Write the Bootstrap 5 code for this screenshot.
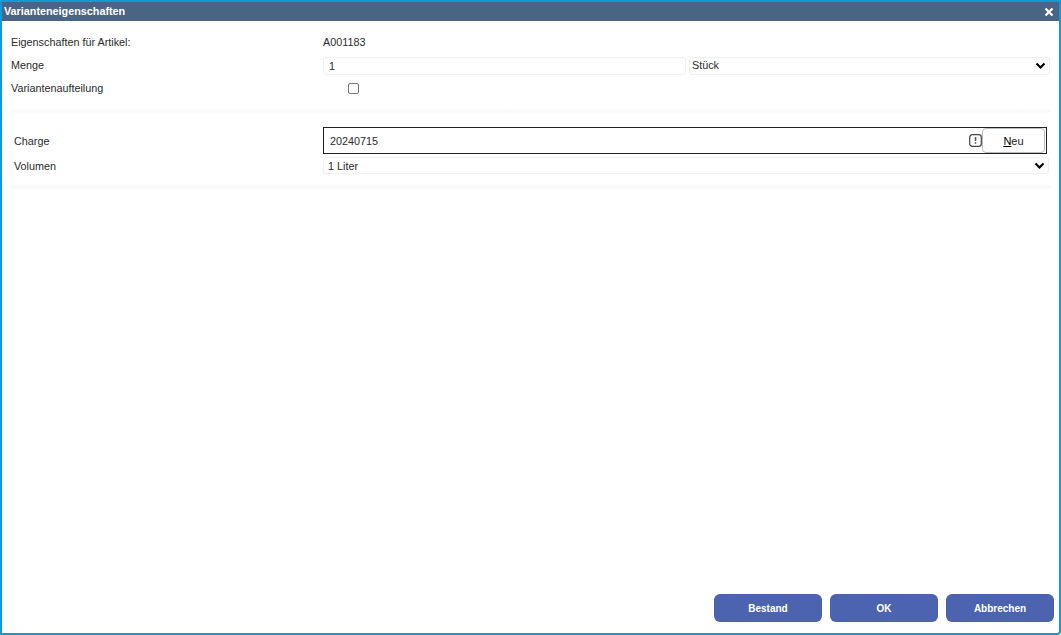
<!DOCTYPE html>
<html lang="de"><head><meta charset="utf-8"><title>Varianteneigenschaften</title>
<link href="https://cdn.jsdelivr.net/npm/bootstrap@5.3.0/dist/css/bootstrap.min.css" rel="stylesheet">
<style>
html,body{height:100%;margin:0;overflow:hidden;background:#fff}
body{font-family:"Liberation Sans",Arial,sans-serif;font-size:10.8px;color:#2a2a2a}
.dlg-frame{height:635px;width:1061px;border:2px solid #0e9bd8;border-bottom-right-radius:4px;background:#fff}
.dlg-title{height:19px;background:#4a6584;color:#fff;font-weight:700;padding:0 5px 0 2px;font-size:10.8px}
.dlg-x{width:10px;height:10px}
.sec-grid{display:grid;align-items:center}
.sec-one{padding:12px 0 0 9px;grid-template-columns:312px 363px 3px 361px;grid-template-rows:19px 18px 18px;row-gap:4.5px}
.sec-two{padding:13px 0 0 12px;grid-template-columns:309px 727px;grid-template-rows:27px 17px;row-gap:3px}
.band{height:6px;margin:0 8px;background:linear-gradient(#fff,#f8f8f8 50%,#fff)}
.band-a{margin-top:11px}
.band-b{margin-top:10px}
.lift{padding-top:2px}
.fld{height:18px;border:1px solid #f0f0f0;border-radius:3px;padding:1px 3px 0 3px;display:flex;align-items:center;background:#fff;justify-content:space-between}
.fld-input{padding-left:5px;width:363px}
.fld-unit{padding:0 3px 0 2px}
.fld-vol{padding-left:4px;width:726px;height:17px}
.chk-cell{padding-left:25px;display:flex}
.chk{width:10.5px;height:11px;border:1px solid #767676;border-radius:2px;background:#fff;display:block}
.charge-box{height:27px;border:1px solid #222;display:flex;align-items:center;padding:1px 1px 1px 3px;width:724px}
.charge-val{flex:1;height:19px;padding:2px 0 0 3px;display:flex;align-items:center}
.warn{width:13px;height:13px;flex:none}
.neu{width:63px;height:25px;border:1px solid #bbb;border-radius:4px;background:#fff;color:#222;padding-top:1px;text-align:center;line-height:23px;font-size:11px}
.neu u{color:#000}
.foot-btn{width:108px;height:28px;background:#4c63b0;color:#fff;font-weight:700;font-size:10px;border:0;border-radius:6px;padding:0}
.foot{padding:0 5px 11px 0;gap:8px}
.chev{width:11px;height:8px}
</style></head>
<body>
<div class="dlg-frame d-flex flex-column">
  <div class="dlg-title d-flex align-items-center justify-content-between">
    <span>Varianteneigenschaften</span>
    <svg class="dlg-x" viewBox="0 0 10 10"><path d="M1.5 1.5l7 7M8.5 1.5l-7 7" stroke="#fff" stroke-width="2.2" fill="none"/></svg>
  </div>
  <div class="sec-grid sec-one">
    <div>Eigenschaften für Artikel:</div><div>A001183</div><div></div><div></div>
    <div>Menge</div><div class="fld fld-input">1</div><div></div>
    <div class="fld fld-unit">Stück<svg class="chev" viewBox="0 0 11 8"><path d="M1.5 1.5l4 4 4-4" stroke="#000" stroke-width="2.2" fill="none"/></svg></div>
    <div>Variantenaufteilung</div><div class="chk-cell"><span class="chk"></span></div><div></div><div></div>
  </div>
  <div class="band band-a"></div>
  <div class="sec-grid sec-two">
    <div class="lift">Charge</div>
    <div class="charge-box">
      <div class="charge-val">20240715</div>
      <svg class="warn" viewBox="0 0 13 13"><rect x=".7" y=".7" width="11.6" height="11.6" rx="2.6" fill="#fff" stroke="#444" stroke-width="1.2"/><path d="M6.5 3v4" stroke="#555" stroke-width="1.5"/><path d="M6.5 8.2v1.6" stroke="#555" stroke-width="1.5"/></svg>
      <div class="neu"><u>N</u>eu</div>
    </div>
    <div class="lift">Volumen</div>
    <div class="fld fld-vol">1 Liter<svg class="chev" viewBox="0 0 11 8"><path d="M1.5 1.5l4 4 4-4" stroke="#000" stroke-width="2.2" fill="none"/></svg></div>
  </div>
  <div class="band band-b"></div>
  <div class="foot d-flex justify-content-end mt-auto">
    <button class="foot-btn" type="button">Bestand</button>
    <button class="foot-btn" type="button">OK</button>
    <button class="foot-btn" type="button">Abbrechen</button>
  </div>
</div>
</body></html>
